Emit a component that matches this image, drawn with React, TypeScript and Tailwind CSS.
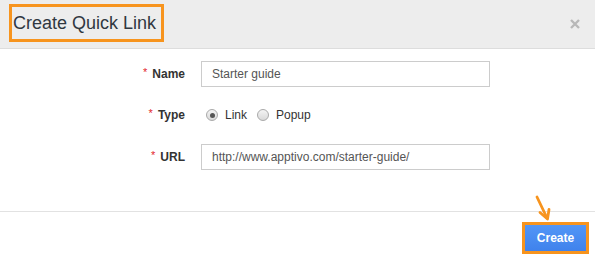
import React from "react";

function Radio({ checked }: { checked?: boolean }) {
  return (
    <span className="flex h-[12px] w-[12px] items-center justify-center rounded-full border border-[#a9a9a9] bg-gradient-to-b from-[#f4f4f4] to-[#d9d9d9]">
      {checked && <span className="h-[5px] w-[5px] rounded-full bg-[#555]" />}
    </span>
  );
}

function Label({ text }: { text: string }) {
  return (
    <div className="flex w-[185px] items-center justify-end gap-[5px]">
      <span className="-mt-[4px] text-[11px] text-[#e3262e]">*</span>
      <span className="text-[12px] font-bold text-[#333]">{text}</span>
    </div>
  );
}

export default function App() {
  return (
    <div className="h-[262px] w-[595px] overflow-hidden bg-white font-['Liberation_Sans',Arial,sans-serif]">
      {/* header */}
      <div className="flex h-[49px] items-start justify-between border-b border-[#dddddd] bg-[#ededed] pt-[4px]">
        <div className="ml-[9px] flex h-[38px] items-center border-[3px] border-[#f7941e] pl-px pr-[5px]">
          <span className="text-[18px] text-[#303841]">Create Quick Link</span>
        </div>
        <svg width="10" height="10" viewBox="0 0 10 10" className="mr-[15px] mt-[15px]">
          <path d="M1 1 L9 9 M9 1 L1 9" stroke="#b8b8b8" strokeWidth="2.4" />
        </svg>
      </div>

      {/* body */}
      <div className="pb-[41px] pt-[12px]">
        <div className="flex h-[26px] items-center gap-[16px]">
          <Label text="Name" />
          <div className="flex h-[26px] w-[289px] items-center border border-[#cccccc] px-[10px] text-[12px] text-[#555]">
            Starter guide
          </div>
        </div>
        <div className="mt-[15px] flex h-[26px] items-center gap-[16px]">
          <Label text="Type" />
          <div className="flex items-center text-[12px] text-[#333]">
            <span className="ml-[5px]"><Radio checked /></span>
            <span className="ml-[7px]">Link</span>
            <span className="ml-[10px]"><Radio /></span>
            <span className="ml-[7px]">Popup</span>
          </div>
        </div>
        <div className="mt-[16px] flex h-[26px] items-center gap-[16px]">
          <Label text="URL" />
          <div className="flex h-[26px] w-[289px] items-center border border-[#cccccc] px-[10px] text-[12px] text-[#555]">
            http://www.apptivo.com/starter-guide/
          </div>
        </div>
      </div>

      {/* footer */}
      <div className="relative flex justify-end border-t border-[#e2e2e2] pr-[6px] pt-[10px]">
        <svg width="20" height="28" viewBox="0 0 20 28" className="absolute right-[42px] top-[-17px]">
          <path d="M4 2 L14 23" stroke="#f7941e" strokeWidth="2.8" strokeLinecap="round" />
          <path d="M7 17.5 L14.5 24 L16 14.5" stroke="#f7941e" strokeWidth="2.8" fill="none" strokeLinecap="round" strokeLinejoin="round" />
        </svg>
        <div className="border-[3px] border-[#f7941e]">
          <button className="flex h-[26px] w-[61px] items-center justify-center bg-gradient-to-b from-[#5296f7] to-[#3f82ec] text-[12px] font-bold text-white">
            Create
          </button>
        </div>
      </div>
    </div>
  );
}
